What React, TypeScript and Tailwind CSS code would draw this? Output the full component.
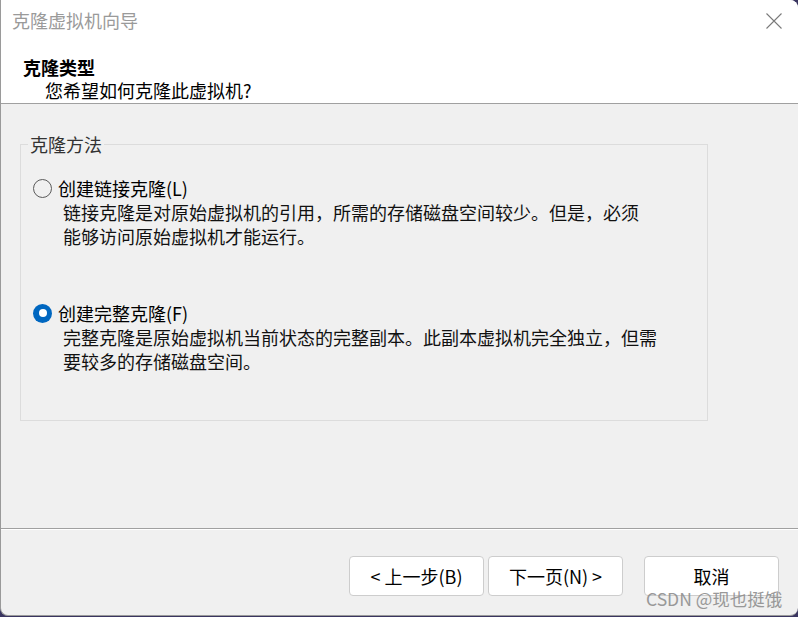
import React from "react";

const font = { fontFamily: '"Noto Sans CJK SC", "Noto Sans", sans-serif' };

function Radio({ checked }: { checked: boolean }) {
  return checked ? (
    <span className="flex h-[19px] w-[19px] shrink-0 items-center justify-center rounded-full bg-[#0067c0]">
      <span className="h-[8px] w-[8px] rounded-full bg-white" />
    </span>
  ) : (
    <span className="h-[19px] w-[19px] shrink-0 rounded-full border border-[#5a5a5a] bg-[#f0f0f0]" />
  );
}

function Btn({ label }: { label: string }) {
  return (
    <button className="flex h-[40px] w-[135px] items-center justify-center rounded-[4px] border border-[#cdcdcd] bg-white text-[18px] leading-[24px] text-black">
      {label}
    </button>
  );
}

export default function App() {
  return (
    <div
      className="relative h-[617px] w-[798px] overflow-hidden bg-[#3a3560]"
      style={font}
    >
      <div className="flex h-[616px] w-[798px] flex-col overflow-hidden rounded-b-[8px] rounded-tr-[8px] border-b border-l border-[#9a9a9a] bg-[#f0f0f0]">
        {/* title bar */}
        <div className="flex h-[40px] shrink-0 items-center justify-between bg-white pl-[11px] pr-[16px]">
          <span className="text-[18px] leading-[24px] text-[#9a9a9a]">克隆虚拟机向导</span>
          <svg width="16" height="16" viewBox="0 0 16 16" className="mt-[1px]">
            <path d="M0.5 0.5 L15.5 15.5 M15.5 0.5 L0.5 15.5" stroke="#7a7a7a" strokeWidth="1.1" fill="none" />
          </svg>
        </div>
        {/* header */}
        <div className="h-[64px] shrink-0 border-b border-[#a0a0a0] bg-white pt-[16px]">
          <div className="h-[47px] border-b border-white">
            <div className="pl-[22px] text-[18px] font-bold leading-[23px] text-black">克隆类型</div>
            <div className="pl-[44px] text-[18px] leading-[23px] text-black">您希望如何克隆此虚拟机?</div>
          </div>
        </div>
        {/* content */}
        <div className="h-[425px] shrink-0 border-b border-[#a0a0a0] pt-[40px]">
          <div className="ml-[19px] h-[277px] w-[688px] border border-[#dcdcdc]">
            <div className="-mt-[12px] ml-[7px] w-fit bg-[#f0f0f0] px-[2px] text-[18px] leading-[22px] text-[#333]">
              克隆方法
            </div>
            <div className="mt-[21px] flex h-[24px] items-center gap-[6px] pl-[12px] text-[18px] leading-[24px] text-black">
              <Radio checked={false} />
              <span>创建链接克隆(L)</span>
            </div>
            <div className="pl-[42px] text-[18px] leading-[24px] text-[#111]">
              <div>链接克隆是对原始虚拟机的引用，所需的存储磁盘空间较少。但是，必须</div>
              <div>能够访问原始虚拟机才能运行。</div>
            </div>
            <div className="mt-[53px] flex h-[24px] items-center gap-[6px] pl-[12px] text-[18px] leading-[24px] text-black">
              <Radio checked={true} />
              <span>创建完整克隆(F)</span>
            </div>
            <div className="pl-[42px] text-[18px] leading-[24px] text-[#111]">
              <div>完整克隆是原始虚拟机当前状态的完整副本。此副本虚拟机完全独立，但需</div>
              <div>要较多的存储磁盘空间。</div>
            </div>
          </div>
        </div>
        {/* footer */}
        <div className="flex-1 border-t border-white">
          <div className="mt-[26px] flex justify-end pr-[19px]">
            <Btn label="< 上一步(B)" />
            <div className="ml-[4px]">
              <Btn label="下一页(N) >" />
            </div>
            <div className="ml-[21px]">
              <Btn label="取消" />
            </div>
          </div>
        </div>
      </div>
      <div className="absolute left-[646px] top-[587px] text-[17.5px] leading-[24px] text-[#8f8f8f] opacity-90">
        CSDN @现也挺饿
      </div>
    </div>
  );
}
